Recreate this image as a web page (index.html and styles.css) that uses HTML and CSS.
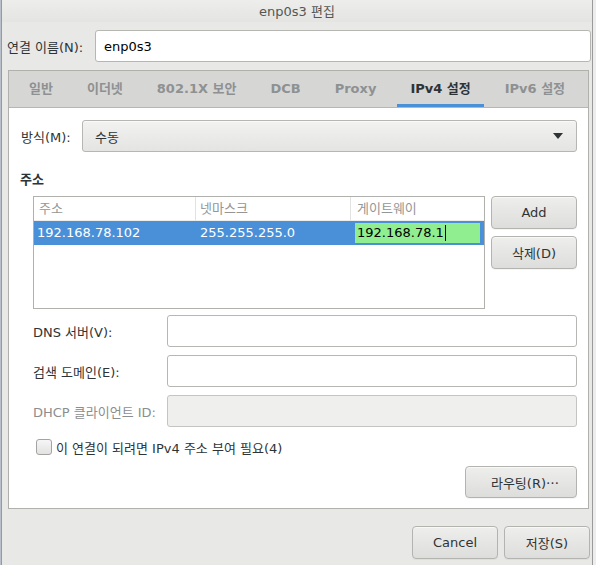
FILE: index.html
```html
<!DOCTYPE html>
<html lang="ko">
<head>
<meta charset="utf-8">
<title>enp0s3 편집</title>
<link rel="stylesheet" href="styles.css">
</head>
<body>
<div class="screen">
  <div class="edge"></div>
  <div class="window">
    <div class="titlebar">enp0s3 편집</div>
    <div class="name-row">
      <span class="name-label">연결 이름(N):</span>
      <div class="entry name-entry">enp0s3</div>
    </div>
    <div class="notebook">
      <div class="tabs">
        <div class="tab">일반</div>
        <div class="tab">이더넷</div>
        <div class="tab">802.1X 보안</div>
        <div class="tab">DCB</div>
        <div class="tab">Proxy</div>
        <div class="tab active">IPv4 설정</div>
        <div class="tab">IPv6 설정</div>
      </div>
      <div class="page">
        <div class="method-row">
          <span class="method-label">방식(M):</span>
          <div class="combo"><span>수동</span><span class="arrow"></span></div>
        </div>
        <div class="section-title">주소</div>
        <div class="addr-block">
          <div class="table">
            <div class="thead">
              <div class="th">주소</div>
              <div class="th">넷마스크</div>
              <div class="th last">게이트웨이</div>
            </div>
            <div class="trow selected">
              <div class="td">192.168.78.102</div>
              <div class="td">255.255.255.0</div>
              <div class="td edit-cell"><span class="edit">192.168.78.1<span class="cursor"></span></span></div>
            </div>
          </div>
          <div class="side-buttons">
            <div class="btn side-btn">Add</div>
            <div class="btn side-btn">삭제(D)</div>
          </div>
        </div>
        <div class="form">
          <div class="form-row">
            <span class="form-label">DNS 서버(V):</span>
            <div class="entry form-entry"></div>
          </div>
          <div class="form-row">
            <span class="form-label">검색 도메인(E):</span>
            <div class="entry form-entry"></div>
          </div>
          <div class="form-row">
            <span class="form-label disabled">DHCP 클라이언트 ID:</span>
            <div class="entry form-entry disabled-entry"></div>
          </div>
        </div>
        <div class="check-row">
          <span class="checkbox"></span>
          <span class="check-label">이 연결이 되려면 IPv4 주소 부여 필요(4)</span>
        </div>
        <div class="route-row">
          <div class="btn route-btn">라우팅(R)<span class="ellipsis">…</span></div>
        </div>
      </div>
    </div>
    <div class="actions">
      <div class="btn action-btn">Cancel</div>
      <div class="btn action-btn">저장(S)</div>
    </div>
  </div>
  <div class="outside"></div>
</div>
</body>
</html>
```

FILE: styles.css
```css
* { box-sizing: border-box; }
html, body {
  margin: 0;
  padding: 0;
  width: 596px;
  height: 565px;
  overflow: hidden;
  background: #ececec;
}
body {
  font-family: "DejaVu Sans", "Noto Sans CJK KR", sans-serif;
  font-size: 13px;
  color: #2e3436;
}
.screen {
  display: flex;
  height: 565px;
}
.edge {
  width: 1px;
  background: #b9c0c9;
}
.window {
  width: 592px;
  height: 565px;
  background: #e8e8e7;
  border-left: 1px solid #9a9a9a;
  border-right: 1px solid #9a9a9a;
  display: flex;
  flex-direction: column;
}
.outside {
  flex: 1;
  background: #ededed;
}
.titlebar {
  height: 22px;
  line-height: 23px;
  text-align: center;
  color: #555753;
  background: linear-gradient(#ededec, #e4e4e3);
}
.name-row {
  margin-top: 8px;
  display: flex;
  align-items: center;
  padding-left: 5px;
  padding-right: 0;
}
.name-label {
  width: 88px;
  flex: none;
  color: #2e3436;
}
.entry {
  height: 32px;
  background: #ffffff;
  border: 1px solid #b6b6b3;
  border-radius: 3px;
  display: flex;
  align-items: center;
}
.name-entry {
  flex: none;
  width: 496px;
  padding-left: 8px;
  color: #000;
}
.notebook {
  margin: 8px 3px 0 6px;
  border: 1px solid #b0b0ad;
  background: #ffffff;
}
.tabs {
  height: 37px;
  background: #d6d6d5;
  border-bottom: 1px solid #b6b6b3;
  display: flex;
  padding-left: 3px;
}
.tab {
  margin: 0 4px;
  padding: 0 13px;
  height: 36px;
  line-height: 36px;
  font-weight: bold;
  color: #8e9192;
  white-space: nowrap;
}
.tab.active {
  color: #2e3436;
  box-shadow: inset 0 -3px 0 #4a90d9;
}
.page {
  background: #ffffff;
  padding: 12px 11px 10px 11px;
}
.method-row {
  display: flex;
  align-items: center;
}
.method-label {
  width: 62px;
  flex: none;
  padding-left: 1px;
}
.combo {
  flex: 1;
  height: 32px;
  border: 1px solid #b6b6b3;
  border-radius: 3px;
  background: linear-gradient(#f2f2f1, #e4e4e3);
  display: flex;
  align-items: center;
  justify-content: space-between;
  padding: 0 13px 0 12px;
  box-shadow: inset 0 1px 0 #fafafa;
}
.arrow {
  width: 0;
  height: 0;
  border-left: 5px solid transparent;
  border-right: 5px solid transparent;
  border-top: 6px solid #2e3436;
}
.section-title {
  margin-top: 20px;
  height: 16px;
  line-height: 16px;
  font-weight: bold;
  margin-bottom: 8px;
}
.addr-block {
  display: flex;
  padding-left: 13px;
  gap: 6px;
}
.table {
  width: 452px;
  height: 113px;
  border: 1px solid #b0b0ad;
  background: #ffffff;
}
.thead, .trow {
  display: grid;
  grid-template-columns: 162px 155px 1fr;
  height: 24px;
}
.th {
  line-height: 23px;
  color: #939695;
  padding-left: 5px;
  border-right: 1px solid #e2e2e0;
  border-bottom: 1px solid #ededec;
  white-space: nowrap;
}
.th:nth-child(2) { padding-left: 4px; }
.th.last { border-right: none; padding-left: 6px; }
.trow.selected {
  background: #4a90d9;
  color: #ffffff;
}
.td {
  line-height: 24px;
  padding-left: 3px;
  white-space: nowrap;
}
.td:nth-child(2) { padding-left: 4px; }
.edit-cell {
  padding: 2px 0 0 4px;
}
.edit {
  display: flex;
  align-items: center;
  width: 125px;
  height: 20px;
  background: #90ee90;
  color: #000;
  padding-left: 2px;
  line-height: 20px;
}
.cursor {
  display: inline-block;
  width: 1px;
  height: 16px;
  background: #000;
  margin-left: 1px;
}
.side-buttons {
  display: flex;
  flex-direction: column;
  gap: 7px;
}
.btn {
  display: flex;
  align-items: center;
  justify-content: center;
  border: 1px solid #b3b3b0;
  border-radius: 4px;
  background: linear-gradient(#eeeeed, #dddddc);
  box-shadow: inset 0 1px 0 #f8f8f8, 0 1px 0 rgba(0,0,0,0.04);
  color: #2e3436;
  white-space: nowrap;
}
.side-btn {
  width: 86px;
  height: 33px;
}
.form {
  margin-top: 6px;
  display: flex;
  flex-direction: column;
  gap: 8px;
  padding-left: 13px;
}
.form-row {
  display: flex;
  align-items: center;
}
.form-label {
  width: 134px;
  flex: none;
  white-space: nowrap;
}
.form-label.disabled {
  color: #8b8e8f;
}
.form-entry {
  flex: 1;
}
.disabled-entry {
  background: #efefee;
  border-color: #c4c4c1;
}
.check-row {
  margin-top: 12px;
  display: flex;
  align-items: center;
  padding-left: 16px;
  height: 16px;
}
.checkbox {
  width: 16px;
  height: 16px;
  border: 1px solid #a3a3a0;
  border-radius: 3px;
  background: linear-gradient(#f6f6f6, #e2e2e1);
  margin-right: 4px;
  flex: none;
}
.route-row {
  margin-top: 11px;
  display: flex;
  justify-content: flex-end;
}
.route-btn {
  width: 112px;
  height: 32px;
  padding-left: 8px;
}
.ellipsis {
  font-family: "Noto Sans CJK KR", sans-serif;
}
.actions {
  margin-top: 17px;
  display: flex;
  justify-content: flex-end;
  gap: 6px;
  padding-right: 2px;
}
.action-btn {
  width: 86px;
  height: 33px;
}
```
